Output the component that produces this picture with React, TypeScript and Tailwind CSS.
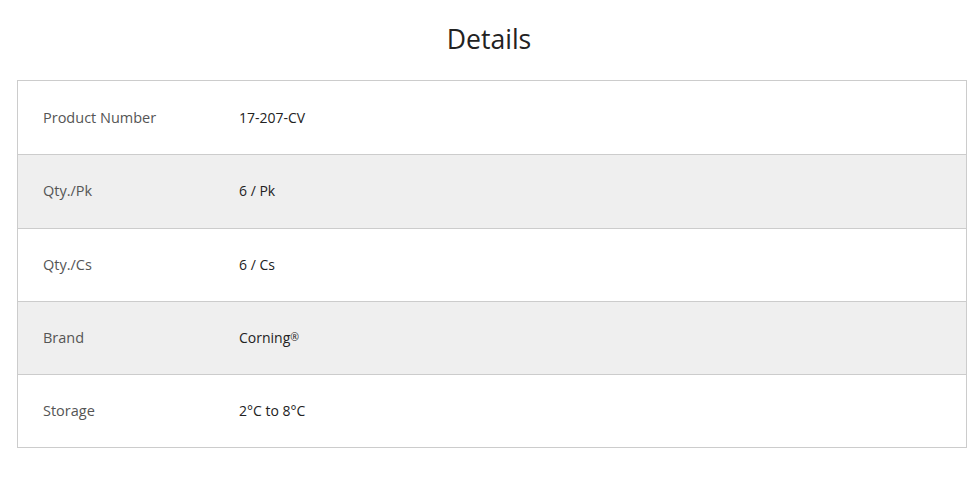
const rows: [string, string][] = [
  ["Product Number", "17-207-CV"],
  ["Qty./Pk", "6 / Pk"],
  ["Qty./Cs", "6 / Cs"],
  ["Brand", "Corning"],
  ["Storage", "2°C to 8°C"],
];

export default function App() {
  return (
    <div className="min-h-screen bg-white px-[17px] pt-[21px] font-['Open_Sans',sans-serif]">
      <h2 className="text-center text-[26.6px] leading-[36px] text-[#222]">Details</h2>
      <div className="mt-[23px] w-[950px] border border-[#cccccc]">
        {rows.map(([label, value], i) => (
          <div
            key={label}
            className={`flex h-[73.3px] items-center px-[25px] ${
              i > 0 ? "border-t border-[#cccccc]" : ""
            } ${i % 2 === 1 ? "bg-[#efefef]" : "bg-white"}`}
          >
            <div className="flex items-baseline leading-[20px]">
              <div className="w-[196px] text-[14.5px] text-[#555]">{label}</div>
              <div className="text-[14px] text-[#222]">
                {value}
                {label === "Brand" && (
                  <sup className="relative -top-[2px] text-[10.5px]">®</sup>
                )}
              </div>
            </div>
          </div>
        ))}
      </div>
    </div>
  );
}
